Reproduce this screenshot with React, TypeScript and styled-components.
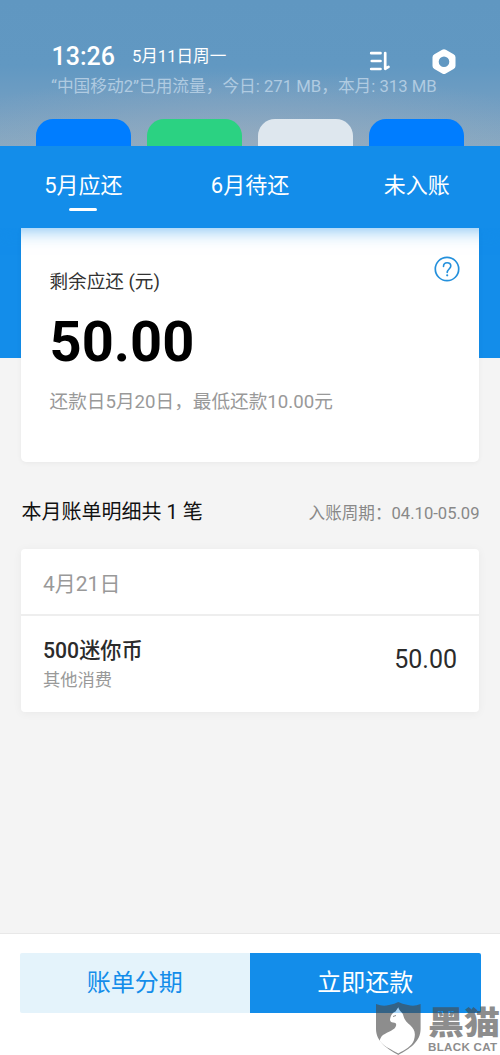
import React from 'react';
import styled, { createGlobalStyle } from 'styled-components';

const GlobalStyle = createGlobalStyle`
  * { box-sizing: border-box; }
  body {
    margin: 0;
    font-family: Roboto, "Noto Sans CJK SC", sans-serif;
    background: #f4f4f4;
  }
`;

const Screen = styled.main`
  position: relative;
  width: 500px;
  height: 1055px;
  display: flex;
  flex-direction: column;
  overflow: hidden;
  background: #f4f4f4;
`;

const StatusPanel = styled.header`
  position: relative;
  z-index: 2;
  flex: none;
  height: 146px;
  padding: 42px 36px 0;
  display: flex;
  flex-direction: column;
  background:
    radial-gradient(ellipse 330px 75px at 50% 100%, rgba(160, 174, 190, 0.6), rgba(160, 174, 190, 0)),
    linear-gradient(#6097c1 0%, #6198c2 45%, #749fc2 75%, #86a8c1 100%);
`;

const StatusRow = styled.div`
  display: flex;
  height: 30px;
  padding: 0 8px 0 15.5px;
  color: #fff;
`;

const Clock = styled.span`
  font-size: 25px;
  font-weight: 500;
  line-height: 30px;
`;

const Today = styled.span`
  flex: 1;
  margin-left: 17px;
  font-size: 16.6px;
  line-height: 30px;
`;

const StatusIcons = styled.div`
  display: flex;
  gap: 41px;
  padding-top: 6px;
  svg { display: block; }
`;

const DataUsage = styled.p`
  margin: 0 0 0 15px;
  padding-top: 4px;
  height: 47px;
  font-size: 16.7px;
  line-height: 22px;
  white-space: nowrap;
  color: #b0cbe1;
`;

const Toggles = styled.div`
  display: flex;
  justify-content: space-between;
`;

const Toggle = styled.div<{ $color: string }>`
  width: 95px;
  height: 27px;
  border-radius: 17px 17px 0 0;
  background: ${(p) => p.$color};
`;

const Tabs = styled.nav`
  position: relative;
  z-index: 1;
  flex: none;
  height: 82px;
  display: grid;
  grid-template-columns: repeat(3, 1fr);
  justify-items: center;
  background: #138dea;
  box-shadow: 0 2px 17px rgba(19, 141, 234, 0.55);
`;

const Tab = styled.div`
  display: flex;
  flex-direction: column;
  align-items: center;
  padding-top: 25px;
  font-size: 22px;
  line-height: 30px;
  color: #fff;
`;

const TabMark = styled.i`
  width: 28px;
  height: 3px;
  margin-top: 7px;
  border-radius: 2px;
  background: #fff;
`;

const Content = styled.section`
  flex: 1;
  padding: 0 21px;
  background: linear-gradient(#138dea 130px, #f4f4f4 130px);
`;

const SummaryCard = styled.article`
  height: 234px;
  padding: 28px 19px 0 28.5px;
  display: flex;
  justify-content: space-between;
  border-radius: 0 0 5px 5px;
  background: #fff;
  box-shadow: 0 1px 5px rgba(0, 0, 0, 0.05);
  svg { flex: none; display: block; }
`;

const SummaryLabel = styled.div`
  padding-top: 12px;
  font-size: 18.6px;
  line-height: 28px;
  color: #333;
`;

const Balance = styled.div`
  margin-top: 13px;
  font-size: 56px;
  font-weight: 700;
  line-height: 66px;
  color: #000;
`;

const DueNote = styled.div`
  margin-top: 14px;
  font-size: 18.65px;
  line-height: 26px;
  color: #999;
`;

const SectionHead = styled.div`
  height: 87px;
  padding: 35px 0 0 0.5px;
  display: flex;
  justify-content: space-between;
  line-height: 30px;
`;

const SectionTitle = styled.h2`
  margin: 0;
  font-size: 20px;
  font-weight: 400;
  color: #111;
`;

const Period = styled.span`
  margin-right: -0.5px;
  padding-top: 2px;
  font-size: 16.6px;
  color: #888;
`;

const BillCard = styled.article`
  height: 163px;
  border-radius: 4px;
  background: #fff;
  box-shadow: 0 1px 10px rgba(0, 0, 0, 0.05);
`;

const BillDate = styled.div`
  height: 67px;
  padding: 20px 22px 0;
  border-bottom: 2px solid #eee;
  font-size: 21px;
  line-height: 30px;
  color: #999;
`;

const BillRow = styled.div`
  display: flex;
  justify-content: space-between;
  padding: 20px 22px 0;
`;

const BillName = styled.div`
  font-size: 21.2px;
  font-weight: 500;
  line-height: 30px;
  color: #2b2b2b;
`;

const BillKind = styled.div`
  font-size: 17.3px;
  line-height: 28px;
  color: #999;
`;

const BillAmount = styled.div`
  padding-top: 9px;
  font-size: 25px;
  line-height: 30px;
  color: #2b2b2b;
`;

const ActionBar = styled.footer`
  flex: none;
  height: 122px;
  padding: 19px 19.5px 0;
  display: flex;
  border-top: 1px solid #e8e8e8;
  background: #fff;
`;

const Action = styled.button<{ $primary?: boolean }>`
  flex: 1;
  height: 60px;
  padding: 0;
  border: 0;
  border-radius: ${(p) => (p.$primary ? '0 2px 2px 0' : '2px 0 0 2px')};
  font-family: inherit;
  font-size: 24px;
  line-height: 60px;
  color: ${(p) => (p.$primary ? '#fff' : '#138dea')};
  background: ${(p) => (p.$primary ? '#138dea' : '#e4f3fb')};
`;

const Watermark = styled.div`
  position: absolute;
  right: 0;
  bottom: 0;
  display: flex;
  gap: 7px;
  color: #484848;
  opacity: 0.62;
`;

const Brand = styled.div`
  width: 72px;
  padding-top: 2px;
  white-space: nowrap;
`;

const BrandName = styled.div`
  height: 38px;
  font-family: "Noto Sans CJK SC", sans-serif;
  font-size: 35px;
  font-weight: 900;
  line-height: 34px;
  transform: scale(1.03, 0.9);
  transform-origin: 0 50%;
`;

const BrandLatin = styled.div`
  font-family: "Liberation Sans", sans-serif;
  font-size: 11.6px;
  font-weight: 700;
  line-height: 12px;
  letter-spacing: 0.3px;
`;

const SortIcon = () => (
  <svg width="22" height="24" viewBox="0 0 22 24" fill="none" stroke="#fff" strokeWidth="2.7" strokeLinecap="round">
    <path d="M2.2 5.2H11.5M2.8 13H11.5M2.2 21H11.5" />
    <path d="M16.2 5V20.8L19.5 18.9" strokeLinejoin="round" />
  </svg>
);

const SettingsIcon = () => (
  <svg width="24" height="27" viewBox="0 0 24 27">
    <path
      fill="#fff"
      fillRule="evenodd"
      d="M10.2 1.7Q12 .7 13.8 1.7L21.6 6.2Q23.5 7.2 23.5 9.2V18Q23.5 20 21.6 21L13.8 25.5Q12 26.5 10.2 25.5L2.4 21Q.5 20 .5 18V9.2Q.5 7.2 2.4 6.2ZM12 8.4A5.3 5.3 0 1 0 12 19A5.3 5.3 0 1 0 12 8.4Z"
    />
  </svg>
);

const HelpIcon = () => (
  <svg width="26" height="26" viewBox="0 0 26 26" fill="none" stroke="#2490dc">
    <circle cx="13" cy="13" r="11.7" strokeWidth="1.7" />
    <path d="M9.5 10.4C9.5 8 11 6.7 13.1 6.7S16.8 8.1 16.8 10C16.8 12.8 13.2 13.2 13.2 16.5" strokeWidth="1.6" strokeLinecap="round" />
    <circle cx="13.2" cy="19.3" r="1.1" fill="#2490dc" stroke="none" />
  </svg>
);

const ShieldCat = () => (
  <svg width="45" height="54" viewBox="0 0 45 54">
    <path
      fill="currentColor"
      d="M0 3Q7 6 13 4Q19 3 22.3 1Q26 3 32 4Q38 6 44.6 3V28C44.6 41 33 48 22.3 54C12 48 0 41 0 28Z"
    />
    <path
      fill="#fff"
      d="M22.3 6.3L19.5 10.5C16.5 11.5 14.8 14 14.2 17.5C13.5 20 15 21 17 21.5C20 21.5 21 23 19.5 26C17.5 30 9 31.5 5.5 35.5C3.8 38 3.5 40 4.5 41C9 46 16 49 22.3 52.4C29 49 36 45 38 39C40 32 38.5 28 34 24C29 20 28 17 27 13.5C26 11 23.5 10.5 22.3 6.3Z"
    />
    <path d="M17 15.5L20 14.5" stroke="currentColor" strokeWidth="1" />
  </svg>
);

const tabs = ['5月应还', '6月待还', '未入账'];
const toggleColors = ['#007dff', '#2bd282', '#dee7ee', '#007dff'];

export default function App() {
  return (
    <>
      <GlobalStyle />
      <Screen>
        <StatusPanel>
          <StatusRow>
            <Clock>13:26</Clock>
            <Today>5月11日周一</Today>
            <StatusIcons>
              <SortIcon />
              <SettingsIcon />
            </StatusIcons>
          </StatusRow>
          <DataUsage>“中国移动2”已用流量，今日: 271 MB，本月: 313 MB</DataUsage>
          <Toggles>
            {toggleColors.map((color, i) => (
              <Toggle key={i} $color={color} />
            ))}
          </Toggles>
        </StatusPanel>
        <Tabs>
          {tabs.map((label, i) => (
            <Tab key={label}>
              {label}
              {i === 0 && <TabMark />}
            </Tab>
          ))}
        </Tabs>
        <Content>
          <SummaryCard>
            <div>
              <SummaryLabel>剩余应还 (元)</SummaryLabel>
              <Balance>50.00</Balance>
              <DueNote>还款日5月20日，最低还款10.00元</DueNote>
            </div>
            <HelpIcon />
          </SummaryCard>
          <SectionHead>
            <SectionTitle>本月账单明细共 1 笔</SectionTitle>
            <Period>入账周期：04.10-05.09</Period>
          </SectionHead>
          <BillCard>
            <BillDate>4月21日</BillDate>
            <BillRow>
              <div>
                <BillName>500迷你币</BillName>
                <BillKind>其他消费</BillKind>
              </div>
              <BillAmount>50.00</BillAmount>
            </BillRow>
          </BillCard>
        </Content>
        <ActionBar>
          <Action>账单分期</Action>
          <Action $primary>立即还款</Action>
        </ActionBar>
        <Watermark>
          <ShieldCat />
          <Brand>
            <BrandName>黑猫</BrandName>
            <BrandLatin>BLACK CAT</BrandLatin>
          </Brand>
        </Watermark>
      </Screen>
    </>
  );
}
